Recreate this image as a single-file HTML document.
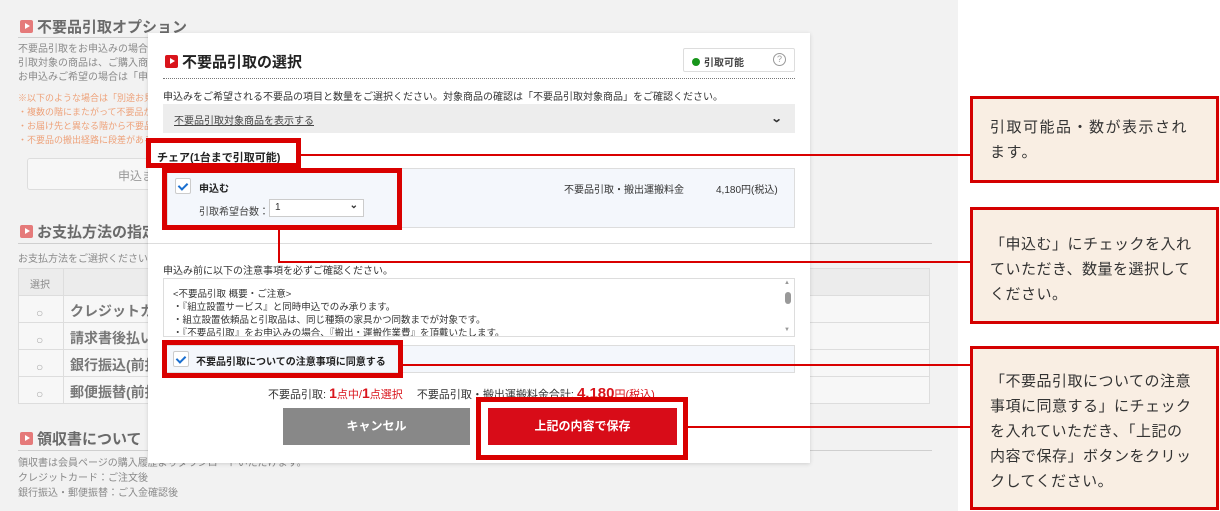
<!DOCTYPE html>
<html><head><meta charset="utf-8"><style>
*{margin:0;padding:0;box-sizing:border-box}
body{width:1220px;height:511px;position:relative;overflow:hidden;background:#fff;font-family:"Liberation Sans","Noto Sans CJK JP",sans-serif;color:#333}
.a{position:absolute;white-space:nowrap}
.bg{position:absolute;left:0;top:0;width:958px;height:511px;background:#f2f2f2}
.fd{color:#8a8a8a}
.ico{display:inline-block;width:13px;height:13px;background:#e57a7a;border-radius:2px;position:relative;vertical-align:-1px;margin-right:4px}
.ico:after{content:"";position:absolute;left:5px;top:3px;border-left:5px solid #fff;border-top:3.5px solid transparent;border-bottom:3.5px solid transparent}
.ico.r{background:#d9141b}
.rb{position:absolute;border:5px solid #d90000}
.ln{position:absolute;background:#d90000}
.cb{position:absolute;width:16px;height:16px;background:#fff;border:1px solid #ccc;border-radius:2px}
.cb:after{content:"";position:absolute;left:4px;top:2px;width:4px;height:7px;border:solid #1a6fd0;border-width:0 2px 2px 0;transform:rotate(45deg)}
.call{position:absolute;left:970px;width:249px;border:3px solid #d40000;background:#f9eee3;font-size:15px;line-height:25px;letter-spacing:1px;color:#333;padding:0 0 0 17px;white-space:nowrap}
</style></head><body>
<div class="bg"></div>
<div class="a fd" style="left:20px;top:16px;font-size:15px;font-weight:bold;color:#6a6a6a"><span class="ico"></span>不要品引取オプション</div>
<div class="a" style="left:18px;top:37px;width:760px;height:1px;background:#cfcfcf"></div>
<div class="a fd" style="left:18px;top:43px;font-size:10px;line-height:14px">不要品引取をお申込みの場合、<br>引取対象の商品は、ご購入商品<br>お申込みご希望の場合は「申込</div>
<div class="a" style="left:18px;top:91px;font-size:9px;line-height:14px;color:#eea27a">※以下のような場合は「別途お見<br>・複数の階にまたがって不要品が<br>・お届け先と異なる階から不要品<br>・不要品の搬出経路に段差がある</div>
<div class="a" style="left:27px;top:158px;width:200px;height:32px;border:1px solid #ddd;border-radius:3px;background:#f7f7f7;font-size:12px;color:#999;padding:8px 0 0 90px">申込ま</div>
<div class="a" style="left:20px;top:221px;font-size:15px;font-weight:bold;color:#6a6a6a"><span class="ico"></span>お支払方法の指定</div>
<div class="a" style="left:18px;top:243px;width:914px;height:1px;background:#cfcfcf"></div>
<div class="a fd" style="left:18px;top:250px;font-size:10px">お支払方法をご選択ください。</div>
<div class="a" style="left:18px;top:268px;width:912px;height:136px;border:1px solid #ddd;background:#f7f7f7"></div>
<div class="a" style="left:19px;top:269px;width:910px;height:26px;background:#ececec"></div>
<div class="a" style="left:63px;top:268px;width:1px;height:136px;background:#ddd"></div>
<div class="a" style="left:18px;top:295px;width:912px;height:1px;background:#ddd"></div>
<div class="a" style="left:18px;top:322px;width:912px;height:1px;background:#ddd"></div>
<div class="a" style="left:18px;top:349px;width:912px;height:1px;background:#ddd"></div>
<div class="a" style="left:18px;top:376px;width:912px;height:1px;background:#ddd"></div>
<div class="a fd" style="left:30px;top:276px;font-size:10px">選択</div>
<div class="a" style="left:36px;top:300px;font-size:12px;line-height:27px;color:#aaa">○<br>○<br>○<br>○</div>
<div class="a" style="left:70px;top:298px;font-size:14px;font-weight:bold;line-height:27px;color:#777">クレジットカ<br>請求書後払い<br>銀行振込(前払<br>郵便振替(前払</div>
<div class="a" style="left:20px;top:428px;font-size:15px;font-weight:bold;color:#6a6a6a"><span class="ico"></span>領収書について</div>
<div class="a" style="left:18px;top:450px;width:914px;height:1px;background:#cfcfcf"></div>
<div class="a fd" style="left:18px;top:456px;font-size:10px;line-height:15px">領収書は会員ページの購入履歴よりダウンロードいただけます。<br>クレジットカード：ご注文後<br>銀行振込・郵便振替：ご入金確認後</div>

<div class="a" style="left:148px;top:33px;width:662px;height:430px;background:#fff;box-shadow:0 1px 4px rgba(0,0,0,.15)"></div>
<div class="a" style="left:165px;top:51px;font-size:15px;font-weight:bold;color:#222"><span class="ico r"></span>不要品引取の選択</div>
<div class="a" style="left:683px;top:48px;width:112px;height:24px;border:1px solid #ddd;border-radius:2px;font-size:10px;font-weight:bold;color:#444;padding:5px 0 0 8px"><span style="display:inline-block;width:8px;height:8px;border-radius:50%;background:#17951a;margin-right:4px"></span>引取可能<span style="position:absolute;right:8px;top:4px;width:13px;height:13px;border:1px solid #999;border-radius:50%;font-size:9px;font-weight:normal;color:#999;text-align:center;line-height:11px">?</span></div>
<div class="a" style="left:163px;top:78px;width:632px;border-top:1px dotted #777"></div>
<div class="a" style="left:163px;top:88px;font-size:10px;color:#333">申込みをご希望される不要品の項目と数量をご選択ください。対象商品の確認は「不要品引取対象商品」をご確認ください。</div>
<div class="a" style="left:163px;top:104px;width:632px;height:29px;background:#ededed"></div>
<div class="a" style="left:174px;top:112px;font-size:10px;color:#444;text-decoration:underline">不要品引取対象商品を表示する</div>
<div class="a" style="left:772px;top:112px;font-size:11px;font-weight:bold;transform:scaleX(1.3)">⌄</div>
<div class="a" style="left:157px;top:149px;font-size:11px;font-weight:bold;color:#222">チェア(1台まで引取可能)</div>
<div class="a" style="left:167px;top:168px;width:628px;height:60px;border:1px solid #ddd;background:#f4f7fc"></div>
<div class="cb" style="left:175px;top:178px"></div>
<div class="a" style="left:199px;top:180px;font-size:10px;font-weight:bold;color:#222">申込む</div>
<div class="a" style="left:199px;top:203px;font-size:10px;color:#444">引取希望台数：</div>
<div class="a" style="left:269px;top:199px;width:95px;height:18px;border:1px solid #ccc;background:#fff;font-size:10px;padding:2px 0 0 5px">1<span style="position:absolute;right:5px;top:0;font-weight:bold">⌄</span></div>
<div class="a" style="left:564px;top:181px;font-size:10px;color:#333">不要品引取・搬出運搬料金</div>
<div class="a" style="left:716px;top:181px;font-size:10px;color:#333">4,180円(税込)</div>
<div class="a" style="left:148px;top:243px;width:662px;height:1px;background:#ddd"></div>
<div class="a" style="left:163px;top:262px;font-size:10px;color:#333">申込み前に以下の注意事項を必ずご確認ください。</div>
<div class="a" style="left:163px;top:278px;width:632px;height:59px;border:1px solid #ddd;overflow:hidden;font-size:9.5px;line-height:13px;color:#333;padding:9px 0 0 9px">&lt;不要品引取 概要・ご注意&gt;<br>・『組立設置サービス』と同時申込でのみ承ります。<br>・組立設置依頼品と引取品は、同じ種類の家具かつ同数までが対象です。<br>・『不要品引取』をお申込みの場合、『搬出・運搬作業費』を頂戴いたします。</div>
<div class="a" style="left:783px;top:279px;width:11px;height:57px;background:#fff"></div>
<div class="a" style="left:785px;top:292px;width:6px;height:12px;border-radius:3px;background:#999"></div>
<div class="a" style="left:784px;top:280px;font-size:6px;color:#999">▲</div>
<div class="a" style="left:784px;top:327px;font-size:6px;color:#999">▼</div>
<div class="a" style="left:163px;top:345px;width:632px;height:28px;border:1px solid #ddd;background:#f4f7fc"></div>
<div class="cb" style="left:173px;top:351px"></div>
<div class="a" style="left:196px;top:353px;font-size:10px;font-weight:bold;color:#222">不要品引取についての注意事項に同意する</div>
<div class="a" style="left:268px;top:385px;font-size:11px;color:#333">不要品引取: <b style="color:#d9141b;font-size:14px">1</b><span style="color:#d9141b">点中/</span><b style="color:#d9141b;font-size:14px">1</b><span style="color:#d9141b">点選択</span>　 不要品引取・搬出運搬料金合計: <b style="color:#d9141b;font-size:15px">4,180</b><span style="color:#d9141b">円(税込)</span></div>
<div class="a" style="left:283px;top:408px;width:187px;height:37px;background:#888;color:#fff;font-size:12px;font-weight:bold;text-align:center;line-height:37px">キャンセル</div>
<div class="a" style="left:488px;top:408px;width:189px;height:37px;background:#d80c18;color:#fff;font-size:12px;font-weight:bold;text-align:center;line-height:37px">上記の内容で保存</div>

<div class="rb" style="left:146px;top:138px;width:155px;height:30px"></div>
<div class="rb" style="left:162px;top:168px;width:240px;height:62px"></div>
<div class="rb" style="left:162px;top:340px;width:241px;height:38px"></div>
<div class="rb" style="left:476px;top:397px;width:212px;height:63px"></div>
<div class="ln" style="left:300px;top:154px;width:672px;height:2px"></div>
<div class="ln" style="left:278px;top:229px;width:2px;height:34px"></div>
<div class="ln" style="left:278px;top:261px;width:694px;height:2px"></div>
<div class="ln" style="left:402px;top:364px;width:570px;height:2px"></div>
<div class="ln" style="left:688px;top:426px;width:284px;height:2px"></div>

<div class="call" style="top:96px;height:87px;padding-top:16px;letter-spacing:1.5px">引取可能品・数が表示され<br>ます。</div>
<div class="call" style="top:207px;height:117px;padding-top:22px;letter-spacing:0.5px">「申込む」にチェックを入れ<br>ていただき、数量を選択して<br>ください。</div>
<div class="call" style="top:346px;height:164px;padding-top:20px;letter-spacing:0.5px">「不要品引取についての注意<br>事項に同意する」にチェック<br>を入れていただき、「上記の<br>内容で保存」ボタンをクリッ<br>クしてください。</div>
</body></html>
